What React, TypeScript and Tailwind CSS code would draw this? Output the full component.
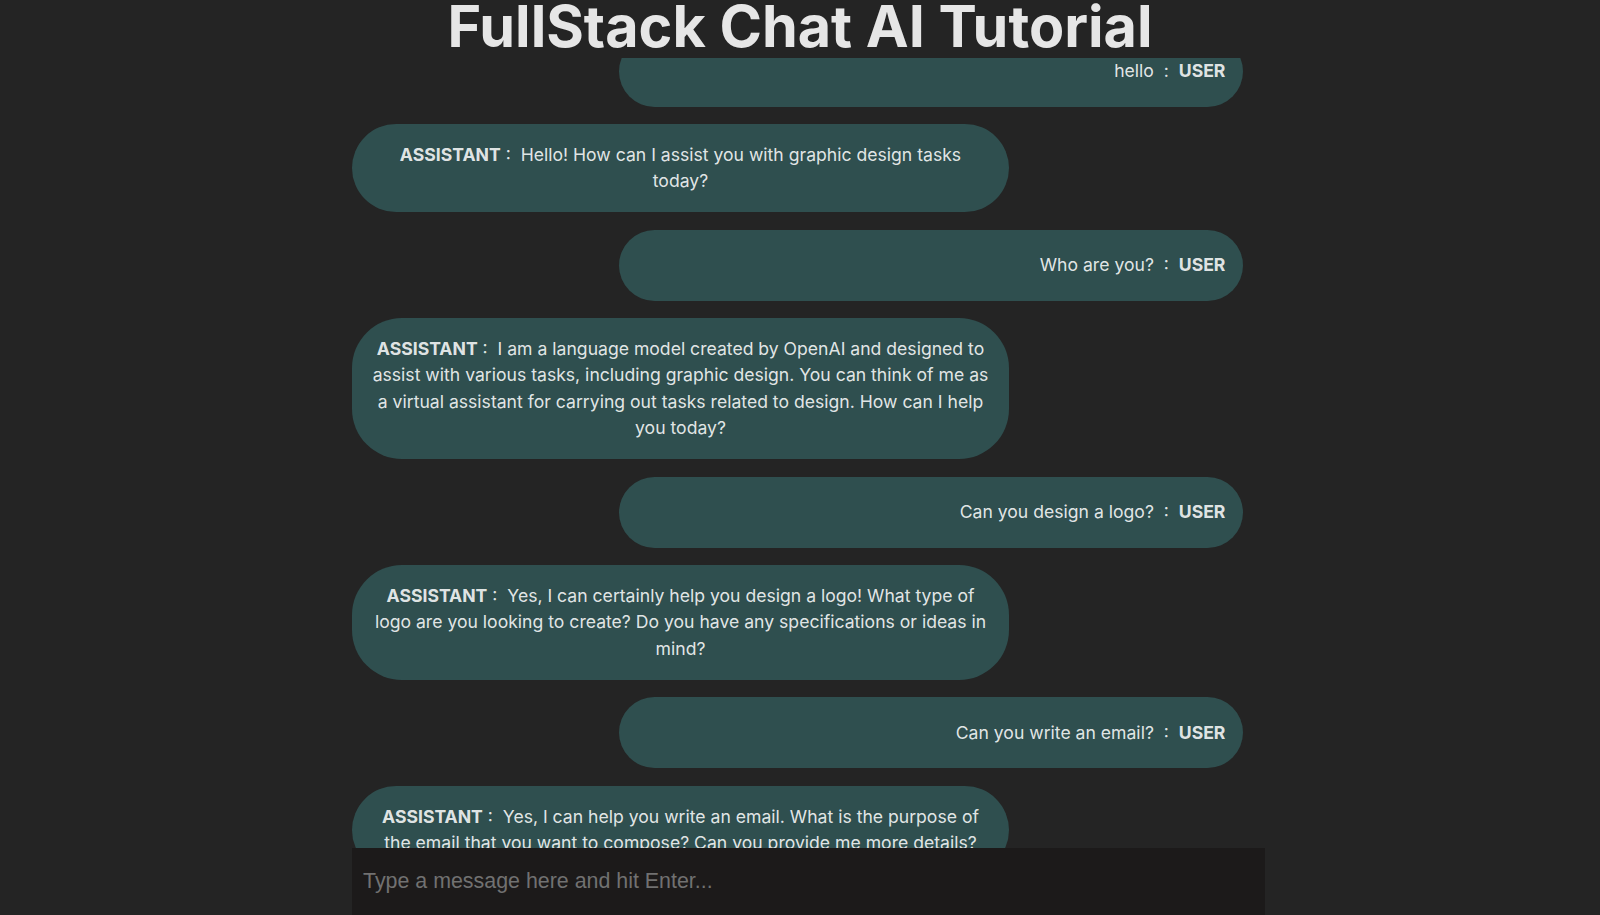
type Message = {
  role: "user" | "assistant";
  content: string;
};

const messages: Message[] = [
  { role: "user", content: "hello" },
  { role: "assistant", content: "Hello! How can I assist you with graphic design tasks today?" },
  { role: "user", content: "Who are you?" },
  {
    role: "assistant",
    content:
      "I am a language model created by OpenAI and designed to assist with various tasks, including graphic design. You can think of me as a virtual assistant for carrying out tasks related to design. How can I help you today?",
  },
  { role: "user", content: "Can you design a logo?" },
  {
    role: "assistant",
    content:
      "Yes, I can certainly help you design a logo! What type of logo are you looking to create? Do you have any specifications or ideas in mind?",
  },
  { role: "user", content: "Can you write an email?" },
  {
    role: "assistant",
    content:
      "Yes, I can help you write an email. What is the purpose of the email that you want to compose? Can you provide me more details?",
  },
];

function ChatBubble({ message }: { message: Message }) {
  if (message.role === "user") {
    return (
      <div className="self-end mr-[22px] w-[624px] shrink-0 rounded-[50px] bg-[#2f4f4f] px-[17.6px] py-[22.3px] text-right">
        {message.content}
        {"\u00a0\u00a0:\u00a0\u00a0"}
        <b className="font-bold">USER</b>
      </div>
    );
  }

  return (
    <div className="self-start w-[657px] shrink-0 rounded-[50px] bg-[#2f4f4f] px-[19px] py-[17.6px] text-center">
      <b className="font-bold">ASSISTANT</b>
      {"\u00a0:\u00a0\u00a0"}
      {message.content}
    </div>
  );
}

export default function App() {
  return (
    <div className="flex h-screen flex-col overflow-hidden bg-[#242424] font-['Inter',sans-serif] text-[17.6px] leading-[26.4px] text-[rgba(255,255,255,0.87)] antialiased">
      <h1 className="shrink-0 pb-[4.5px] text-center text-[57.5px] font-bold leading-[53px] text-[#e6e6e6]">
        FullStack Chat AI Tutorial
      </h1>

      <div className="ml-[352px] flex min-h-0 w-[913px] flex-1 flex-col">
        <div className="min-h-0 flex-1 overflow-hidden">
          <div className="mt-[-21.8px] flex flex-col gap-[17.6px]">
            {messages.map((m, i) => (
              <ChatBubble key={i} message={m} />
            ))}
          </div>
        </div>

        <input
          type="text"
          placeholder="Type a message here and hit Enter..."
          className="h-[67px] w-full shrink-0 bg-[#1c1a1a] px-[11px] font-['Liberation_Sans',Arial,sans-serif] text-[21.4px] text-white outline-none placeholder:text-[#717171]"
        />
      </div>
    </div>
  );
}
